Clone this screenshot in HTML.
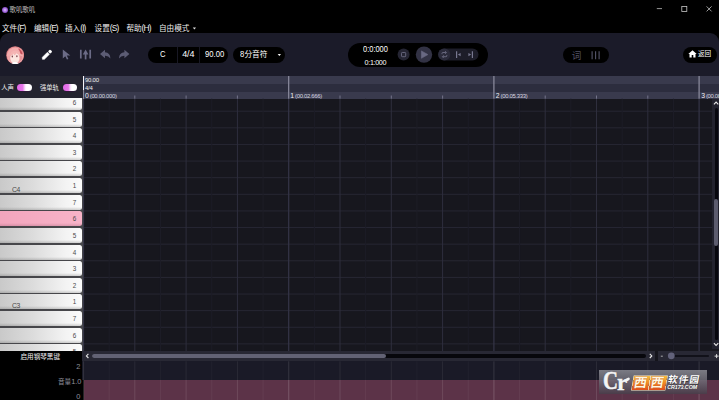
<!DOCTYPE html>
<html lang="zh">
<head>
<meta charset="utf-8">
<title>歌叽歌叽</title>
<style>
*{margin:0;padding:0;box-sizing:border-box}
html,body{width:719px;height:400px;overflow:hidden;background:#000}
body{position:relative;font-family:"Liberation Sans","Noto Sans CJK SC",sans-serif;color:#fff}
.abs{position:absolute}
.t{position:absolute;white-space:nowrap;line-height:1}
#toolbar{left:0;top:32.6px;width:719px;height:43.4px;background:#1b1b29;border-radius:9px 9px 0 0}
.pill{position:absolute;background:#000;border-radius:8px;top:47px;height:16px}
#hdrL{left:0;top:76px;width:83px;height:22px;background:#24242f}
.tog{position:absolute;top:83.6px;width:14.7px;height:7.7px;border-radius:4px;background:linear-gradient(90deg,#e268e6 0%,#e678e9 38%,#fbeafc 55%,#fff 64%,#fff 100%);box-shadow:0 0.5px 0.5px rgba(60,0,70,.6)}
#keys{left:0;top:98px;width:83.5px;height:253.4px;background:#46464a;overflow:hidden}
.key{position:absolute;left:0;width:82px;height:15px;border-radius:0 2.5px 2.5px 0;background:linear-gradient(180deg,rgba(255,255,255,0) 0%,rgba(255,255,255,0) 80%,rgba(90,90,90,.28) 100%),linear-gradient(90deg,#c9c9c9 0%,#dcdcdc 40%,#f3f3f3 80%,#fbfbfb 100%)}
.key.pink{background:linear-gradient(180deg,rgba(255,255,255,0) 80%,rgba(120,60,80,.22) 100%),linear-gradient(90deg,#f2a5bd,#f8b3c8)}
.kn{position:absolute;right:5.8px;top:0;font-size:6.3px;line-height:15.4px;color:#4a4a4a}
.kc{position:absolute;left:11.9px;top:7.6px;font-size:6.8px;line-height:7px;color:#484848;letter-spacing:-0.4px}
#grid{left:83.5px;top:98.6px;width:635.5px;height:252.8px;background:#17171e;overflow:hidden}
.m{top:23.5px;font-size:7.6px;color:#eee}
.m span{font-size:8.4px;letter-spacing:-0.85px}
.nx{transform:scaleX(.85);transform-origin:0 50%}
.rl{top:92.6px;font-size:5.9px;color:#d8d8e0;letter-spacing:-0.3px;line-height:6px}
.rl b{font-weight:normal;font-size:6.8px;color:#f0f0f4;letter-spacing:0;margin-right:-0.4px}
</style>
</head>
<body>
<!-- title bar -->
<div class="abs" style="left:1.5px;top:6.5px;width:6.2px;height:6.2px;border-radius:50%;background:radial-gradient(circle,#dcbcff 0%,#9a5ed6 55%,#4a267c 100%)"></div>
<div class="t" style="left:9.6px;top:6.8px;font-size:6.4px;color:#c4c4c4">歌叽歌叽</div>
<svg class="abs" style="left:650px;top:0" width="69" height="18" viewBox="0 0 69 18">
 <path d="M6.8 8.6h5.2" stroke="#bdbdbd" stroke-width="0.8" fill="none"/>
 <rect x="31.8" y="6.4" width="5" height="5" stroke="#c8c8c8" stroke-width="0.8" fill="none"/>
 <path d="M56.6 6.4l5 5M61.6 6.4l-5 5" stroke="#c8c8c8" stroke-width="0.8" fill="none"/>
</svg>
<!-- menu -->
<div class="t m" style="left:2px">文件<span>(F)</span></div>
<div class="t m" style="left:34px">编辑<span>(E)</span></div>
<div class="t m" style="left:65px">插入<span>(I)</span></div>
<div class="t m" style="left:94.6px">设置<span>(S)</span></div>
<div class="t m" style="left:126.4px">帮助<span>(H)</span></div>
<div class="t m" style="left:159px;top:24.7px">自由模式</div>
<svg class="abs" style="left:190.6px;top:24.6px" width="8" height="6" viewBox="0 0 8 6"><path d="M1.8 2.5 L5 2.5 L3.4 4.6 Z" fill="#e0e0e0"/></svg>

<!-- toolbar -->
<div id="toolbar" class="abs"></div>
<!-- avatar -->
<svg class="abs" style="left:6px;top:45.5px" width="18.4" height="18.4" viewBox="0 0 18.4 18.4">
 <defs><clipPath id="avc"><circle cx="9.2" cy="9.2" r="9"/></clipPath>
 <radialGradient id="avg" cx="50%" cy="45%" r="60%"><stop offset="0" stop-color="#efa9a8"/><stop offset="0.7" stop-color="#e3868a"/><stop offset="1" stop-color="#cf6a72"/></radialGradient></defs>
 <circle cx="9.2" cy="9.2" r="9" fill="url(#avg)"/>
 <g clip-path="url(#avc)">
  <path d="M1 8 Q3 1.5 9.4 1.4 Q15.4 1.6 17.4 8 Q17.6 13 14.6 16.6 L4 16.6 Q0.8 13 1 8 Z" fill="#f2acac"/>
  <ellipse cx="8.8" cy="12" rx="4.7" ry="5.2" fill="#fce6df"/>
  <path d="M3.4 10.4 Q4.4 4.6 9.4 4.4 Q13.6 4.6 14.6 10 Q12.4 8.8 10.8 6.8 Q10 9 7.6 9.4 Q8.2 8.2 8.2 7.2 Q6.4 9.8 3.4 10.4 Z" fill="#f4b5b3"/>
  <path d="M12 2.6 Q15.8 3.6 16.8 8.2 Q15.6 8.6 14.4 7.4 Q13.6 4.6 12 2.6 Z" fill="#c6525c"/>
  <path d="M13.6 9.4 Q14.6 12.6 13 16.4 Q16.4 14.2 16.4 10.2 Z" fill="#e59096"/>
  <path d="M2 10 Q2.6 14.6 5 16.4 Q3.8 13 4.2 9.8 Z" fill="#eea4a6"/>
  <ellipse cx="6.3" cy="10.5" rx="0.65" ry="0.95" fill="#6e3640"/>
  <ellipse cx="10.9" cy="10.2" rx="0.65" ry="0.95" fill="#6e3640"/>
  <path d="M5.4 17 Q9 15.2 12.6 17 L12.6 19 L5.4 19 Z" fill="#fff"/>
 </g>
</svg>
<svg class="abs" style="left:36px;top:44px" width="100" height="22" viewBox="0 0 100 22">
 <!-- pencil -->
 <g transform="translate(11.1 10.6) rotate(-45)">
  <path d="M-6.7 0 L-5.3 -1.45 L1.9 -1.45 L1.9 1.45 L-5.3 1.45 Z" fill="#fff" stroke="#fff" stroke-width="0.5" stroke-linejoin="round"/>
  <rect x="2.7" y="-1.7" width="3.1" height="3.4" rx="1.2" fill="#fff"/>
 </g>
 <!-- cursor -->
 <path d="M26.8 5.6 L26.8 14.4 L29.3 12.2 L30.9 15.6 L32.4 14.9 L30.8 11.6 L34.3 11.4 Z" fill="#6b6b86"/>
 <!-- split icon -->
 <path d="M44.8 5.8v8.8M54.2 5.8v8.8" stroke="#6b6b86" stroke-width="1.7" fill="none"/>
 <path d="M49.6 9v6.4" stroke="#6b6b86" stroke-width="1.7" fill="none"/>
 <path d="M46.8 10.4 L49.6 5.6 L52.4 10.4 Z" fill="#6b6b86"/>
 <!-- undo -->
 <path d="M64 10 L69 5.8 L69 8.3 Q74.2 8.6 74.4 14.4 Q72.6 11.6 69 11.7 L69 14.2 Z" fill="#5c5c74"/>
 <!-- redo -->
 <path d="M93.4 10 L88.4 5.8 L88.4 8.3 Q83.2 8.6 83 14.4 Q84.8 11.6 88.4 11.7 L88.4 14.2 Z" fill="#5c5c74"/>
</svg>
<!-- pill 1 -->
<div class="pill" style="left:148px;width:80px"></div>
<div class="abs" style="left:177px;top:47px;width:1px;height:16px;background:#181824"></div>
<div class="abs" style="left:199px;top:47px;width:1px;height:16px;background:#181824"></div>
<div class="t nx" style="left:160.3px;top:50px;font-size:9px">C</div>
<div class="t" style="left:182.2px;top:50px;font-size:9px;letter-spacing:-0.1px">4/4</div>
<div class="t nx" style="left:205px;top:50px;font-size:9px">90.00</div>
<!-- pill 2 -->
<div class="pill" style="left:233.2px;width:52px"></div>
<div class="t" style="left:240.2px;top:50.4px;font-size:7.7px"><span class="nx" style="font-size:9px;display:inline-block;width:4.2px">8</span>分音符</div>
<svg class="abs" style="left:276px;top:52px" width="8" height="6" viewBox="0 0 8 6"><path d="M1.7 2 L5 2 L3.35 4.1 Z" fill="#f0f0f0"/></svg>
<!-- transport -->
<div class="abs" style="left:347.5px;top:43px;width:140px;height:24px;border-radius:12px;background:#000"></div>
<div class="t nx" style="left:362.8px;top:44.9px;font-size:9px;transform:scaleX(.83)">0:0:000</div>
<div class="t" style="left:364.6px;top:58.7px;font-size:7.2px;letter-spacing:-0.35px">0:1:000</div>
<svg class="abs" style="left:395px;top:44px" width="90" height="22" viewBox="0 0 90 22">
 <circle cx="8.6" cy="10.6" r="6" fill="#252533"/>
 <rect x="6.5" y="8.5" width="4.2" height="4.2" rx="0.8" fill="none" stroke="#6c6c84" stroke-width="0.9"/>
 <circle cx="29" cy="10.6" r="8.2" fill="#323244"/>
 <path d="M26.4 6.9 L32.9 10.6 L26.4 14.3 Z" fill="#696983" stroke="#696983" stroke-width="0.6" stroke-linejoin="round"/>
 <rect x="43" y="4.6" width="40.5" height="12" rx="6" fill="#1d1d29"/>
 <circle cx="49.3" cy="10.6" r="6" fill="#2b2b3b"/>
 <path d="M47 10.2 v-0.8 q0-0.9 0.9-0.9 h3 M50.2 7.2 l1.2 1.3 l-1.2 1.3 M51.8 11 v0.8 q0 0.9 -0.9 0.9 h-3 M48.6 14 l-1.2 -1.3 l1.2 -1.3" fill="none" stroke="#77778f" stroke-width="0.8"/>
 <path d="M61.6 7.2v6.8" stroke="#77778f" stroke-width="1.2"/>
 <path d="M62.8 10.6 L65.6 8.9 L65.6 12.3 Z" fill="#77778f"/>
 <path d="M77.4 7.2v6.8" stroke="#77778f" stroke-width="1.2"/>
 <path d="M76.2 10.6 L73.4 8.9 L73.4 12.3 Z" fill="#77778f"/>
</svg>
<!-- lyric pill -->
<div class="abs" style="left:563px;top:46.5px;width:46px;height:16px;border-radius:8px;background:#000"></div>
<div class="t" style="left:571.8px;top:50.6px;font-size:9.6px;color:#505064">词</div>
<svg class="abs" style="left:590.2px;top:49.6px" width="14" height="11" viewBox="0 0 14 11">
 <path d="M2.1 1.3v8M5.6 1.3v8M9.1 1.3v8" stroke="#55556a" stroke-width="1.1"/>
</svg>
<!-- return -->
<div class="abs" style="left:683px;top:46.5px;width:33.5px;height:16px;border-radius:8px;background:#000"></div>
<svg class="abs" style="left:688px;top:50px" width="9" height="8" viewBox="0 0 9 8">
 <path d="M4.5 0.3 L0.3 4 L1.5 4 L1.5 7.6 L3.7 7.6 L3.7 5 L5.3 5 L5.3 7.6 L7.5 7.6 L7.5 4 L8.7 4 Z" fill="#fff"/>
</svg>
<div class="t" style="left:698px;top:51.2px;font-size:6.6px">返回</div>

<!-- header left -->
<div id="hdrL" class="abs"></div>
<div class="t" style="left:1.2px;top:84.9px;font-size:6.4px;color:#eee">人声</div>
<div class="tog" style="left:17px"></div>
<div class="t" style="left:40px;top:84.9px;font-size:6.3px;color:#eee">强单轨</div>
<div class="tog" style="left:62.5px"></div>

<!-- ruler -->
<div class="abs" style="left:83px;top:76px;width:636px;height:8px;background:#393a4d"></div>
<div class="abs" style="left:83px;top:84px;width:636px;height:7.5px;background:#2c2d3e"></div>
<div class="abs" style="left:83px;top:91.5px;width:636px;height:7.1px;background:#393a4d"></div>
<div class="t" style="left:85px;top:77.2px;font-size:6px;color:#eee;letter-spacing:-0.25px">90.00</div>
<div class="t" style="left:85px;top:84.8px;font-size:6px;color:#eee;letter-spacing:-0.25px">4/4</div>
<div class="t rl" style="left:85px"><b>0</b> (00.00.000)</div>
<div class="t rl" style="left:290.3px"><b>1</b> (00.02.666)</div>
<div class="t rl" style="left:495.8px"><b>2</b> (00.05.333)</div>
<div class="t rl" style="left:701.2px"><b>3</b> (00.08.000)</div>

<!-- piano keys -->
<div id="keys" class="abs">
<div class="key" style="top:-3.00px"><span class="kn">6</span></div>
<div class="key" style="top:13.62px"><span class="kn">5</span></div>
<div class="key" style="top:30.24px"><span class="kn">4</span></div>
<div class="key" style="top:46.86px"><span class="kn">3</span></div>
<div class="key" style="top:63.48px"><span class="kn">2</span></div>
<div class="key" style="top:80.10px"><span class="kn">1</span><span class="kc">C4</span></div>
<div class="key" style="top:96.72px"><span class="kn">7</span></div>
<div class="key pink" style="top:113.34px"><span class="kn">6</span></div>
<div class="key" style="top:129.96px"><span class="kn">5</span></div>
<div class="key" style="top:146.58px"><span class="kn">4</span></div>
<div class="key" style="top:163.20px"><span class="kn">3</span></div>
<div class="key" style="top:179.82px"><span class="kn">2</span></div>
<div class="key" style="top:196.44px"><span class="kn">1</span><span class="kc">C3</span></div>
<div class="key" style="top:213.06px"><span class="kn">7</span></div>
<div class="key" style="top:229.68px"><span class="kn">6</span></div>
<div class="key" style="top:246.30px"><span class="kn">5</span></div>
</div>
<!-- grid -->
<div id="grid" class="abs"></div>
<div class="abs" style="left:82px;top:361.3px;width:637px;height:19px;background:#1a1a27"></div>
<div class="abs" style="left:83.5px;top:380px;width:635.5px;height:20px;background:#5c3348"></div>
<svg id="gridsvg" class="abs" style="left:83px;top:76px" width="636" height="324">
<rect x="0.5" y="34.70" width="629" height="1" fill="#272733"/>
<rect x="0.5" y="51.32" width="629" height="1" fill="#272733"/>
<rect x="0.5" y="67.94" width="629" height="1" fill="#272733"/>
<rect x="0.5" y="84.56" width="629" height="1" fill="#272733"/>
<rect x="0.5" y="101.18" width="629" height="1" fill="#272733"/>
<rect x="0.5" y="117.80" width="629" height="1" fill="#272733"/>
<rect x="0.5" y="134.42" width="629" height="1" fill="#272733"/>
<rect x="0.5" y="151.04" width="629" height="1" fill="#272733"/>
<rect x="0.5" y="167.66" width="629" height="1" fill="#272733"/>
<rect x="0.5" y="184.28" width="629" height="1" fill="#272733"/>
<rect x="0.5" y="200.90" width="629" height="1" fill="#272733"/>
<rect x="0.5" y="217.52" width="629" height="1" fill="#272733"/>
<rect x="0.5" y="234.14" width="629" height="1" fill="#272733"/>
<rect x="0.5" y="250.76" width="629" height="1" fill="#272733"/>
<rect x="0.5" y="267.38" width="629" height="1" fill="#272733"/>
<rect x="-0.10" y="22.7" width="1.2" height="252.6" fill="#353547"/>
<rect x="-0.10" y="285.3" width="1.2" height="18.7" fill="#ffffff" opacity="0.1"/>
<rect x="-0.10" y="304" width="1.2" height="20" fill="#ffffff" opacity="0.15"/>
<rect x="-0.10" y="0" width="1.2" height="22.7" fill="#8d8da0"/>
<rect x="25.65" y="22.7" width="1" height="252.6" fill="#1d1d27"/>
<rect x="25.65" y="285.3" width="1" height="18.7" fill="#ffffff" opacity="0.03"/>
<rect x="25.65" y="304" width="1" height="20" fill="#ffffff" opacity="0.05"/>
<rect x="51.30" y="22.7" width="1" height="252.6" fill="#2e2e3d"/>
<rect x="51.30" y="285.3" width="1" height="18.7" fill="#ffffff" opacity="0.07"/>
<rect x="51.30" y="304" width="1" height="20" fill="#ffffff" opacity="0.11"/>
<rect x="51.30" y="19.5" width="1" height="3.2" fill="#74748a"/>
<rect x="76.95" y="22.7" width="1" height="252.6" fill="#1d1d27"/>
<rect x="76.95" y="285.3" width="1" height="18.7" fill="#ffffff" opacity="0.03"/>
<rect x="76.95" y="304" width="1" height="20" fill="#ffffff" opacity="0.05"/>
<rect x="102.60" y="22.7" width="1" height="252.6" fill="#2e2e3d"/>
<rect x="102.60" y="285.3" width="1" height="18.7" fill="#ffffff" opacity="0.07"/>
<rect x="102.60" y="304" width="1" height="20" fill="#ffffff" opacity="0.11"/>
<rect x="102.60" y="19.5" width="1" height="3.2" fill="#74748a"/>
<rect x="128.25" y="22.7" width="1" height="252.6" fill="#1d1d27"/>
<rect x="128.25" y="285.3" width="1" height="18.7" fill="#ffffff" opacity="0.03"/>
<rect x="128.25" y="304" width="1" height="20" fill="#ffffff" opacity="0.05"/>
<rect x="153.90" y="22.7" width="1" height="252.6" fill="#2e2e3d"/>
<rect x="153.90" y="285.3" width="1" height="18.7" fill="#ffffff" opacity="0.07"/>
<rect x="153.90" y="304" width="1" height="20" fill="#ffffff" opacity="0.11"/>
<rect x="153.90" y="19.5" width="1" height="3.2" fill="#74748a"/>
<rect x="179.55" y="22.7" width="1" height="252.6" fill="#1d1d27"/>
<rect x="179.55" y="285.3" width="1" height="18.7" fill="#ffffff" opacity="0.03"/>
<rect x="179.55" y="304" width="1" height="20" fill="#ffffff" opacity="0.05"/>
<rect x="205.10" y="22.7" width="1.2" height="252.6" fill="#353547"/>
<rect x="205.10" y="285.3" width="1.2" height="18.7" fill="#ffffff" opacity="0.1"/>
<rect x="205.10" y="304" width="1.2" height="20" fill="#ffffff" opacity="0.15"/>
<rect x="205.10" y="0" width="1.2" height="22.7" fill="#8d8da0"/>
<rect x="230.85" y="22.7" width="1" height="252.6" fill="#1d1d27"/>
<rect x="230.85" y="285.3" width="1" height="18.7" fill="#ffffff" opacity="0.03"/>
<rect x="230.85" y="304" width="1" height="20" fill="#ffffff" opacity="0.05"/>
<rect x="256.50" y="22.7" width="1" height="252.6" fill="#2e2e3d"/>
<rect x="256.50" y="285.3" width="1" height="18.7" fill="#ffffff" opacity="0.07"/>
<rect x="256.50" y="304" width="1" height="20" fill="#ffffff" opacity="0.11"/>
<rect x="256.50" y="19.5" width="1" height="3.2" fill="#74748a"/>
<rect x="282.15" y="22.7" width="1" height="252.6" fill="#1d1d27"/>
<rect x="282.15" y="285.3" width="1" height="18.7" fill="#ffffff" opacity="0.03"/>
<rect x="282.15" y="304" width="1" height="20" fill="#ffffff" opacity="0.05"/>
<rect x="307.80" y="22.7" width="1" height="252.6" fill="#2e2e3d"/>
<rect x="307.80" y="285.3" width="1" height="18.7" fill="#ffffff" opacity="0.07"/>
<rect x="307.80" y="304" width="1" height="20" fill="#ffffff" opacity="0.11"/>
<rect x="307.80" y="19.5" width="1" height="3.2" fill="#74748a"/>
<rect x="333.45" y="22.7" width="1" height="252.6" fill="#1d1d27"/>
<rect x="333.45" y="285.3" width="1" height="18.7" fill="#ffffff" opacity="0.03"/>
<rect x="333.45" y="304" width="1" height="20" fill="#ffffff" opacity="0.05"/>
<rect x="359.10" y="22.7" width="1" height="252.6" fill="#2e2e3d"/>
<rect x="359.10" y="285.3" width="1" height="18.7" fill="#ffffff" opacity="0.07"/>
<rect x="359.10" y="304" width="1" height="20" fill="#ffffff" opacity="0.11"/>
<rect x="359.10" y="19.5" width="1" height="3.2" fill="#74748a"/>
<rect x="384.75" y="22.7" width="1" height="252.6" fill="#1d1d27"/>
<rect x="384.75" y="285.3" width="1" height="18.7" fill="#ffffff" opacity="0.03"/>
<rect x="384.75" y="304" width="1" height="20" fill="#ffffff" opacity="0.05"/>
<rect x="410.30" y="22.7" width="1.2" height="252.6" fill="#353547"/>
<rect x="410.30" y="285.3" width="1.2" height="18.7" fill="#ffffff" opacity="0.1"/>
<rect x="410.30" y="304" width="1.2" height="20" fill="#ffffff" opacity="0.15"/>
<rect x="410.30" y="0" width="1.2" height="22.7" fill="#8d8da0"/>
<rect x="436.05" y="22.7" width="1" height="252.6" fill="#1d1d27"/>
<rect x="436.05" y="285.3" width="1" height="18.7" fill="#ffffff" opacity="0.03"/>
<rect x="436.05" y="304" width="1" height="20" fill="#ffffff" opacity="0.05"/>
<rect x="461.70" y="22.7" width="1" height="252.6" fill="#2e2e3d"/>
<rect x="461.70" y="285.3" width="1" height="18.7" fill="#ffffff" opacity="0.07"/>
<rect x="461.70" y="304" width="1" height="20" fill="#ffffff" opacity="0.11"/>
<rect x="461.70" y="19.5" width="1" height="3.2" fill="#74748a"/>
<rect x="487.35" y="22.7" width="1" height="252.6" fill="#1d1d27"/>
<rect x="487.35" y="285.3" width="1" height="18.7" fill="#ffffff" opacity="0.03"/>
<rect x="487.35" y="304" width="1" height="20" fill="#ffffff" opacity="0.05"/>
<rect x="513.00" y="22.7" width="1" height="252.6" fill="#2e2e3d"/>
<rect x="513.00" y="285.3" width="1" height="18.7" fill="#ffffff" opacity="0.07"/>
<rect x="513.00" y="304" width="1" height="20" fill="#ffffff" opacity="0.11"/>
<rect x="513.00" y="19.5" width="1" height="3.2" fill="#74748a"/>
<rect x="538.65" y="22.7" width="1" height="252.6" fill="#1d1d27"/>
<rect x="538.65" y="285.3" width="1" height="18.7" fill="#ffffff" opacity="0.03"/>
<rect x="538.65" y="304" width="1" height="20" fill="#ffffff" opacity="0.05"/>
<rect x="564.30" y="22.7" width="1" height="252.6" fill="#2e2e3d"/>
<rect x="564.30" y="285.3" width="1" height="18.7" fill="#ffffff" opacity="0.07"/>
<rect x="564.30" y="304" width="1" height="20" fill="#ffffff" opacity="0.11"/>
<rect x="564.30" y="19.5" width="1" height="3.2" fill="#74748a"/>
<rect x="589.95" y="22.7" width="1" height="252.6" fill="#1d1d27"/>
<rect x="589.95" y="285.3" width="1" height="18.7" fill="#ffffff" opacity="0.03"/>
<rect x="589.95" y="304" width="1" height="20" fill="#ffffff" opacity="0.05"/>
<rect x="615.50" y="22.7" width="1.2" height="252.6" fill="#353547"/>
<rect x="615.50" y="285.3" width="1.2" height="18.7" fill="#ffffff" opacity="0.1"/>
<rect x="615.50" y="304" width="1.2" height="20" fill="#ffffff" opacity="0.15"/>
<rect x="615.50" y="0" width="1.2" height="22.7" fill="#8d8da0"/>
<rect x="641.25" y="22.7" width="1" height="252.6" fill="#1d1d27"/>
<rect x="641.25" y="285.3" width="1" height="18.7" fill="#ffffff" opacity="0.03"/>
<rect x="641.25" y="304" width="1" height="20" fill="#ffffff" opacity="0.05"/>
</svg>

<div class="abs" style="left:82.7px;top:76px;width:1.7px;height:13.5px;background:#f4f4f8"></div>
<div class="abs" style="left:82.7px;top:89.5px;width:1.7px;height:9.1px;background:#8a8a9a"></div>
<!-- v scrollbar -->
<div class="abs" style="left:712px;top:98.7px;width:7px;height:250px;background:#22222e"></div>
<div class="abs" style="left:714.6px;top:107.8px;width:3.8px;height:232px;border-radius:2px;background:#07070e"></div>
<div class="abs" style="left:714.2px;top:199.3px;width:4.3px;height:47.2px;border-radius:2.2px;background:#5c5c6e"></div>
<svg class="abs" style="left:712px;top:98px" width="7" height="252" viewBox="0 0 7 252">
 <path d="M1.9 6.3 L4.1 4.1 L6.3 6.3" fill="none" stroke="#e6e6e6" stroke-width="1.1"/>
 <path d="M1.9 245.2 L4.1 247.4 L6.3 245.2" fill="none" stroke="#e6e6e6" stroke-width="1.1"/>
</svg>
<!-- h scrollbar -->
<div class="abs" style="left:82px;top:351.3px;width:637px;height:10px;background:#15151c"></div>
<div class="abs" style="left:82px;top:351.3px;width:573px;height:10px;background:#282834"></div>
<div class="abs" style="left:657.5px;top:351.3px;width:61.5px;height:10px;background:#282834"></div>
<div class="abs" style="left:91.5px;top:354px;width:554.5px;height:4.4px;border-radius:2.2px;background:#07070c"></div>
<div class="abs" style="left:91.5px;top:354px;width:294.5px;height:4.4px;border-radius:2.2px;background:#626274"></div>
<svg class="abs" style="left:83px;top:351.3px" width="636" height="10" viewBox="0 0 636 10">
 <path d="M5.4 2.8 L3.4 4.9 L5.4 7" fill="none" stroke="#e6e6e6" stroke-width="1.1"/>
 <path d="M566.8 2.8 L568.8 4.9 L566.8 7" fill="none" stroke="#e6e6e6" stroke-width="1.1"/>
 <path d="M577.8 5.2h2" stroke="#bbb" stroke-width="0.9"/>
 <rect x="590" y="4.2" width="36" height="1.6" rx="0.8" fill="#0a0a10"/>
 <circle cx="588.3" cy="4.8" r="3.4" fill="#62627a"/>
 <path d="M631.6 5.1h4M633.6 3.1v4" stroke="#ddd" stroke-width="1"/>
</svg>

<!-- bottom-left -->
<div class="t" style="left:20.5px;top:354.2px;font-size:6.6px;color:#eee">启用钢琴黑键</div>
<div class="t" style="left:76.2px;top:363px;font-size:7.4px;color:#8e8e9a">2</div>
<div class="t" style="left:58px;top:377.6px;font-size:6.6px;color:#8e8e9a">音量<span style="font-size:7.4px">1.0</span></div>
<div class="t" style="left:76.2px;top:392.8px;font-size:7.4px;color:#8e8e9a">0</div>
<!-- volume panel -->

<!-- watermark -->
<div class="abs" style="left:599px;top:370px;width:108px;height:23.7px;background:linear-gradient(180deg,rgba(150,150,158,.78) 0%,rgba(112,110,120,.82) 45%,rgba(72,62,74,.88) 100%)"></div>
<div class="t" style="left:603.2px;top:368.2px;font-size:26px;font-weight:bold;font-family:'Liberation Serif',serif;color:#f4f4f4;transform:scaleX(.8);transform-origin:0 50%;-webkit-text-stroke:0.5px #f4f4f4;text-shadow:0 0 1px rgba(40,40,40,.6)">C</div>
<div class="t" style="left:617px;top:371.4px;font-size:23px;font-weight:bold;font-family:'Liberation Serif',serif;color:#f4f4f4;-webkit-text-stroke:0.4px #f4f4f4;text-shadow:0 0 1px rgba(40,40,40,.6)">r</div>
<div class="abs" style="left:625px;top:377.6px;width:5px;height:2.8px;border-radius:60% 40% 60% 40%;background:#f4f4f4;transform:rotate(-25deg)"></div>
<div class="abs" style="left:632.8px;top:375.8px;width:15.6px;height:13.8px;transform:skewX(-10deg);background:linear-gradient(180deg,#f8c03c 0%,#f08a28 50%,#e04e1c 100%);box-shadow:0 0 0 0.6px #fff0cc"></div>
<div class="abs" style="left:649.6px;top:375.8px;width:15.6px;height:13.8px;transform:skewX(-10deg);background:linear-gradient(180deg,#f8c03c 0%,#f08a28 50%,#e04e1c 100%);box-shadow:0 0 0 0.6px #fff0cc"></div>
<div class="t" style="left:634px;top:376px;font-size:13px;font-weight:bold;color:#fff6e0;transform:skewX(-10deg);letter-spacing:3.8px;text-shadow:0 0 1px #b03a10">西西</div>
<div class="t" style="left:667.6px;top:375px;font-size:9.6px;font-weight:bold;color:#fff;transform:skewX(-10deg);letter-spacing:1.2px;text-shadow:0.5px 0.5px 0.5px #333">软件园</div>
<div class="t" style="left:667.2px;top:385.2px;font-size:5.4px;font-weight:bold;font-style:italic;color:#fff;letter-spacing:-0.1px;text-shadow:0.4px 0.4px 0.4px #333">CR173.COM</div>

</body>
</html>
